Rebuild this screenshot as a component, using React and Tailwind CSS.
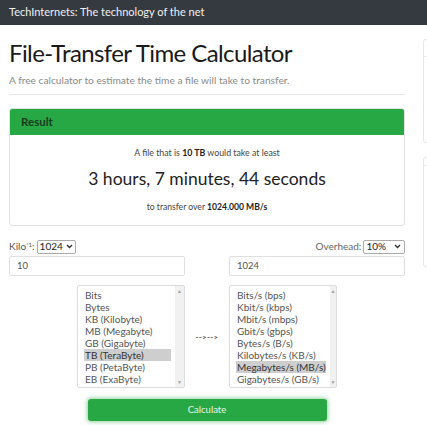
import React from "react";

const fromUnits = ["Bits", "Bytes", "KB (Kilobyte)", "MB (Megabyte)", "GB (Gigabyte)", "TB (TeraByte)", "PB (PetaByte)", "EB (ExaByte)"];
const toUnits = [
  "Bits/s (bps)",
  "Kbit/s (kbps)",
  "Mbit/s (mbps)",
  "Gbit/s (gbps)",
  "Bytes/s (B/s)",
  "Kilobytes/s (KB/s)",
  "Megabytes/s (MB/s)",
  "Gigabytes/s (GB/s)",
];

const Caret = () => (
  <svg width="7" height="5" viewBox="0 0 7 5" className="ml-[3px]">
    <path d="M1 1 L3.5 3.5 L6 1" stroke="#333" strokeWidth="1.4" fill="none" />
  </svg>
);

const ListBox = ({ items, selected }) => (
  <div className="flex w-[108px] h-[103px] border border-[#dcdcdc] rounded-[2px] bg-white overflow-hidden">
    <div className="flex-1 pt-[3px] pl-[6px] pr-[4px]">
      {items.map((v, i) => (
        <div
          key={i}
          className={`h-[12px] leading-[12px] pl-[1px] whitespace-nowrap overflow-hidden text-[10px] ${
            i === selected ? "bg-[#cecece] text-[#333]" : "text-[#555]"
          }`}
        >
          {v}
        </div>
      ))}
    </div>
    <div className="w-[9px] bg-[#f1f1f1] flex flex-col justify-between items-center py-[2px]">
      <span className="text-[5px] leading-[6px] text-[#a0a0a0]">▲</span>
      <span className="text-[5px] leading-[6px] text-[#a0a0a0]">▼</span>
    </div>
  </div>
);

const App = () => {
  return (
    <div className="w-[427px] h-[425px] overflow-hidden bg-white font-['Lato',sans-serif] text-[#212529]">
      <div className="h-[25px] bg-[#343a40] flex items-center pl-[9px] text-[11px] text-[#f1f1f1]">
        TechInternets: The technology of the net
      </div>
      <div className="flex">
        <div className="w-[396px] ml-[9px] shrink-0">
          <h1 className="mt-[13px] text-[24px] leading-[30px] font-normal tracking-[-0.6px] text-[#1a1a1a]">
            File-Transfer Time Calculator
          </h1>
          <p className="mt-[5px] text-[10.2px] leading-[14px] text-[#8a8a8a]">
            A free calculator to estimate the time a file will take to transfer.
          </p>
          <div className="mt-[7px] h-px bg-[#e6e6e6]" />
          <div className="mt-[13px] border border-[#e2e2e2] rounded-[3px] overflow-hidden">
            <div className="h-[26px] bg-[#28a745] flex items-center pl-[11px] text-[11.5px] font-bold text-[#173d1f]">
              Result
            </div>
            <div className="flex flex-col items-center pt-[12px] pb-[12px]">
              <div className="text-[8.8px] leading-[12px] text-[#444]">
                A file that is <b className="text-[#222]">10 TB</b> would take at least
              </div>
              <div className="mt-[8px] text-[17.5px] leading-[24px] text-[#222]">3 hours, 7 minutes, 44 seconds</div>
              <div className="mt-[10px] text-[8.6px] leading-[12px] text-[#444]">
                to transfer over <b className="text-[#222]">1024.000 MB/s</b>
              </div>
            </div>
          </div>
          <div className="mt-[13px] flex justify-between items-end">
            <div className="flex items-center text-[10px] text-[#555]">
              <span>
                Kilo<sup className="text-[6px]">*1</sup>:
              </span>
              <span className="ml-[2px] flex items-center h-[14px] px-[2px] border border-[#aaa] rounded-[2px] text-[10px] text-[#222]">
                1024
                <Caret />
              </span>
            </div>
            <div className="flex items-center text-[10px] text-[#666]">
              <span>Overhead:</span>
              <span className="ml-[2px] flex items-center h-[14px] pl-[2px] pr-[3px] border border-[#aaa] rounded-[2px] text-[10px] text-[#222]">
                10%
                <span className="w-[5px]" />
                <Caret />
              </span>
            </div>
          </div>
          <div className="mt-[2px] flex justify-between">
            <div className="w-[176px] h-[20px] border border-[#e0e0e0] rounded-[2px] flex items-center pl-[7px] text-[9.5px] text-[#555]">
              10
            </div>
            <div className="w-[176px] h-[20px] border border-[#e0e0e0] rounded-[2px] flex items-center pl-[7px] text-[9.5px] text-[#555]">
              1024
            </div>
          </div>
          <div className="mt-[9px] flex justify-between">
            <div className="w-[176px] flex justify-end">
              <ListBox items={fromUnits} selected={5} />
            </div>
            <div className="flex-1 flex items-center justify-center text-[8px] font-bold tracking-[0.3px] text-[#555]">
              --&gt;--&gt;
            </div>
            <div className="w-[176px] flex">
              <ListBox items={toUnits} selected={6} />
            </div>
          </div>
          <div className="mt-[11px] flex justify-center">
            <div className="w-[239px] h-[22px] bg-[#28a745] rounded-[3px] shadow-[0_0_4px_1px_rgba(40,167,69,0.5)] flex items-center justify-center text-[9.5px] text-[#e8f5ea]">
              Calculate
            </div>
          </div>
        </div>
        <div className="ml-[18px] w-[80px] shrink-0 flex flex-col">
          <div className="mt-[14px] h-[104px] border border-[#e6e6e6] rounded-[3px]">
            <div className="h-[17px] border-b border-[#ececec]" />
          </div>
          <div className="mt-[14px] h-[110px] border border-[#e6e6e6] rounded-[3px]">
            <div className="h-[8px] border-b border-[#ececec]" />
          </div>
        </div>
      </div>
    </div>
  );
};

export default App;
